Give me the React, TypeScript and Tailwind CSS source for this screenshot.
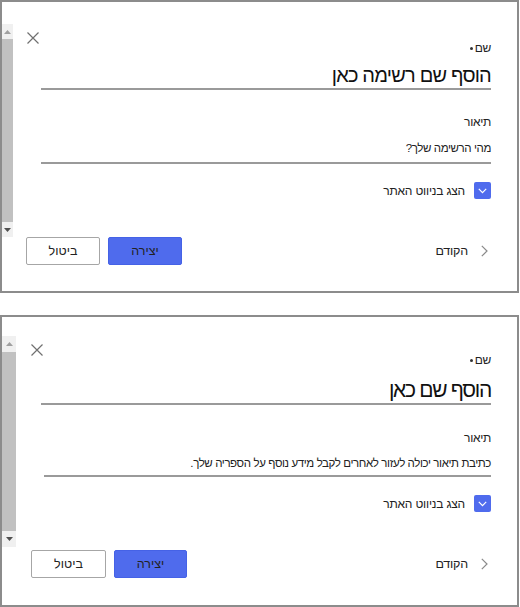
import React from 'react';

interface PanelStyle {
  box: string;
  bar: string;
  barTop: string;
  barThumb: string;
  main: string;
  label: string;
  fields: string;
  titleText: string;
  descLabel: string;
  desc: string;
  check: string;
  footer: string;
  cancel: string;
  create: string;
}

interface PanelProps {
  title: string;
  description: string;
  s: PanelStyle;
}

const font = 'font-["Liberation_Sans","DejaVu_Sans",sans-serif]';

const CloseIcon = () => (
  <svg width="12" height="12" viewBox="0 0 12 12" className="block">
    <path d="M0.5 0.5 L11.5 11.5 M11.5 0.5 L0.5 11.5" stroke="#707070" strokeWidth="1.2" fill="none" />
  </svg>
);

// fake Windows-style scrollbar on the left edge of the panel
const ScrollBar = ({ s }: { s: PanelStyle }) => (
  <div className={`flex flex-col bg-[#f0f0f0] ${s.bar}`}>
    <div className={`flex items-center justify-center ${s.barTop}`}>
      <svg width="7" height="4" viewBox="0 0 7 4">
        <path d="M0 4 L3.5 0 L7 4 Z" fill="#a0a0a0" />
      </svg>
    </div>
    <div className={`w-full bg-[#c1c1c1] ${s.barThumb}`} />
    <div className={`flex items-center justify-center ${s.barTop}`}>
      <svg width="7" height="4" viewBox="0 0 7 4">
        <path d="M0 0 L3.5 4 L7 0 Z" fill="#505050" />
      </svg>
    </div>
  </div>
);

const Panel = ({ title, description, s }: PanelProps) => (
  <div className={`flex w-[519px] border-2 border-[#8c8c8c] bg-white ${s.box}`}>
    <ScrollBar s={s} />
    <div className={`flex flex-1 flex-col pr-[26px] ${s.main}`}>
      <div className="flex items-start justify-between">
        <CloseIcon />
        <div dir="rtl" className={`flex items-center gap-[2px] text-[12px] leading-4 tracking-[-0.3px] text-[#222] ${s.label}`}>
          <span>שם</span>
          <span className="h-[3px] w-[3px] rounded-full bg-[#333]" />
        </div>
      </div>

      <div className={`flex flex-col ${s.fields}`}>
        <div dir="rtl" className={`border-b-2 border-[#9a9a9a] text-[#111] ${s.titleText}`}>
          {title}
        </div>
        <div dir="rtl" className={`text-[12px] leading-4 tracking-[-0.3px] text-[#222] ${s.descLabel}`}>
          תיאור
        </div>
        <div dir="rtl" className={`border-b-2 border-[#9a9a9a] text-[11.5px] leading-4 tracking-[-0.4px] text-[#222] ${s.desc}`}>
          {description}
        </div>
        <div dir="rtl" className={`flex items-center gap-[9px] ${s.check}`}>
          <span className="flex h-[17px] w-[17px] items-center justify-center rounded-[2px] bg-[#4f6bed]">
            <svg width="9" height="6" viewBox="0 0 9 6">
              <path d="M0.8 0.8 L4.5 4.6 L8.2 0.8" stroke="#ffffff" strokeWidth="1.2" fill="none" />
            </svg>
          </span>
          <span className="text-[12px] leading-4 tracking-[-0.2px] text-[#222]">הצג בניווט האתר</span>
        </div>
      </div>

      <div className={`flex items-center justify-between ${s.footer}`}>
        <div className="flex items-center gap-[8px]">
          <button className={`h-[28px] rounded-[2px] border border-[#a6a6a6] bg-white text-[12.5px] text-[#222] ${s.cancel}`}>
            ביטול
          </button>
          <button className={`h-[28px] rounded-[2px] border border-[#4562e6] bg-[#4f6bed] text-[12.5px] text-[#222] ${s.create}`}>
            יצירה
          </button>
        </div>
        <div className="mr-[3px] flex items-center gap-[13px]">
          <span dir="rtl" className="text-[12.5px] leading-4 tracking-[-0.2px] text-[#222]">הקודם</span>
          <svg width="7" height="12" viewBox="0 0 7 12">
            <path d="M0.8 0.8 L6 6 L0.8 11.2" stroke="#8a8a8a" strokeWidth="1.2" fill="none" />
          </svg>
        </div>
      </div>
    </div>
  </div>
);

const topStyle: PanelStyle = {
  box: 'h-[293px]',
  bar: 'mt-[22px] h-[213px] w-[11px]',
  barTop: 'h-[15px]',
  barThumb: 'h-[183px]',
  main: 'pt-[30px] pl-[14px]',
  label: 'mt-[8px]',
  fields: 'mt-[6px] ml-[14px]',
  titleText: 'text-[20px] leading-[26px] tracking-[-0.8px]',
  descLabel: 'mt-[24px]',
  desc: 'mt-[10px] pb-[6px]',
  check: 'mt-[18px]',
  footer: 'mt-[38px] ml-[-1px]',
  cancel: 'w-[74px]',
  create: 'w-[74px]',
};

const bottomStyle: PanelStyle = {
  box: 'h-[292px]',
  bar: 'mt-[19px] h-[211px] w-[14px]',
  barTop: 'h-[16px]',
  barThumb: 'h-[179px]',
  main: 'pt-[27px] pl-[15px]',
  label: 'mt-[8px]',
  fields: 'mt-[8px] ml-[10px]',
  titleText: 'text-[21px] leading-[27px] tracking-[-1.3px]',
  descLabel: 'mt-[25px]',
  desc: 'mt-[9px] pb-[4px] ml-[3px]',
  check: 'mt-[18px]',
  footer: 'mt-[38px]',
  cancel: 'w-[75px]',
  create: 'w-[73px]',
};

export default function App() {
  return (
    <div className={`flex min-h-[607px] w-[520px] flex-col gap-[22px] bg-white ${font}`}>
      <Panel title="הוסף שם רשימה כאן" description="מהי הרשימה שלך?" s={topStyle} />
      <Panel
        title="הוסף שם כאן"
        description="כתיבת תיאור יכולה לעזור לאחרים לקבל מידע נוסף על הספריה שלך."
        s={bottomStyle}
      />
    </div>
  );
}
